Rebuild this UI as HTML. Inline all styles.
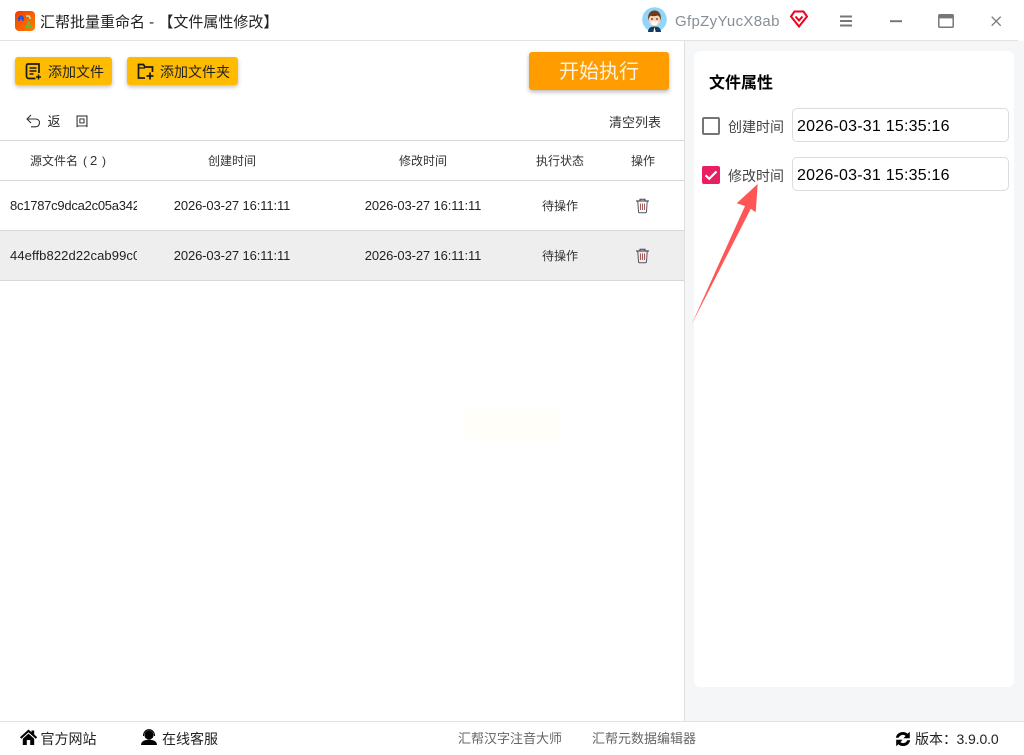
<!DOCTYPE html>
<html lang="zh"><head><meta charset="utf-8"><title>汇帮批量重命名</title>
<style>
html,body{margin:0;padding:0;width:1024px;height:755px;overflow:hidden;background:#fff}
body{font-family:"Liberation Sans","Noto Sans CJK SC",sans-serif;color:#222;position:relative}
.a{position:absolute;white-space:nowrap}
.c{text-align:center}
.l{position:absolute;background:#d8d8d8;height:1px;left:0;width:684px}
.btn{position:absolute;background:#ffbb00;border-radius:3px;box-shadow:0 2px 4px rgba(0,0,0,.25);height:28px;top:57px}
.t{font-size:13px;line-height:20px;letter-spacing:-.12px;color:#222}
.h{font-size:12px;line-height:20px;color:#333}
.in{position:absolute;left:792px;width:215px;height:32px;border:1px solid #dcdcdc;border-radius:5px;background:#fff;font-size:16px;line-height:35px;text-indent:4px;letter-spacing:.22px;color:#000;white-space:nowrap}
svg{position:absolute;overflow:visible}
</style></head><body>

<!-- title bar -->
<svg style="left:15px;top:11px" width="20" height="20" viewBox="0 0 20 20"><defs><linearGradient id="g" x1="0" y1="0" x2="1" y2="1"><stop offset="0" stop-color="#f23c00"/><stop offset="1" stop-color="#ff8000"/></linearGradient></defs><rect width="20" height="20" rx="4" fill="url(#g)"/><path d="M3 7.500h5M4 10V6.500L6 5l2 1.500V10" fill="none" stroke="#1a4fe0" stroke-width="1.400"/><path d="M11 5h3l1.500 3" fill="none" stroke="#b7e8a8" stroke-width="1.600"/><path d="M11 17l2.500-6 2.500 6M12 15h3" fill="none" stroke="#3bd04a" stroke-width="1.300"/></svg>
<div class="a" style="left:40px;top:12px;font-size:15px;line-height:22px;color:#222">汇帮批量重命名 - 【文件属性修改】</div>

<svg style="left:642px;top:7px" width="25" height="25" viewBox="0 0 25 25"><circle cx="12.500" cy="12.500" r="12.300" fill="#8fd6fa"/><path d="M6 25c0-4 3-5.500 6.500-5.500S19 21 19 25z" fill="#173a5e"/><path d="M12.500 20l-1.200 5h2.400z" fill="#fff"/><ellipse cx="12.500" cy="13" rx="5.800" ry="6.500" fill="#fbd3b4"/><path d="M6.300 14c-1.200-7 2-10.500 6.200-10.500s7.400 3.500 6.200 10.500c-.5-3.500-1.500-5-3-5.500-2 .8-6 .8-7 .3-1.200 1-2.100 2.500-2.400 4.700z" fill="#6e3a1e"/><path d="M8.800 14.500h7.400c-.5 3-2.200 3.800-3.700 3.800s-3.200-.8-3.700-3.800z" fill="#fff"/><circle cx="10" cy="12" r=".9" fill="#333"/><circle cx="15" cy="12" r=".9" fill="#333"/></svg>
<div class="a" style="left:675px;top:11px;font-size:15px;line-height:22px;color:#868e96;letter-spacing:.32px">GfpZyYucX8ab</div>
<svg style="left:790px;top:10px" width="18" height="18" viewBox="0 0 18 18"><path d="M4.500 1.500h9L17 6.500 9 16.500 1 6.500z" fill="#fff" stroke="#f0001c" stroke-width="2"/><path d="M5.500 6.500L9 10.500l3.500-4" fill="none" stroke="#f0001c" stroke-width="2"/></svg>

<svg style="left:840px;top:15px" width="13" height="12" viewBox="0 0 13 12"><path d="M0 1.500h12M0 6h12M0 10.500h12" stroke="#777" stroke-width="2"/></svg>
<svg style="left:890px;top:20px" width="13" height="3"><path d="M0 1.200h12" stroke="#777" stroke-width="2"/></svg>
<svg style="left:938px;top:14px" width="17" height="14" viewBox="0 0 17 14"><rect x=".8" y=".8" width="14.400" height="12.400" rx="1" fill="none" stroke="#777" stroke-width="1.500"/><rect x=".8" y=".8" width="14.400" height="3.600" fill="#777"/></svg>
<svg style="left:991px;top:16px" width="11" height="11" viewBox="0 0 11 11"><path d="M.7.700l9 9M9.700.700l-9 9" stroke="#777" stroke-width="1.300"/></svg>

<div class="a" style="left:0;top:40px;width:1018px;height:1px;background:#e2e2e2"></div>

<!-- right panel -->
<div class="a" style="left:684px;top:41px;width:340px;height:680px;background:#f5f6f8;border-left:1px solid #dedede;box-sizing:border-box"></div>
<div class="a" style="left:694px;top:51px;width:320px;height:636px;background:#fff;border-radius:6px"></div>
<div class="a" style="left:709px;top:73px;font-size:16px;line-height:22px;font-weight:700;color:#000">文件属性</div>

<div class="a" style="left:702px;top:117px;width:18px;height:18px;box-sizing:border-box;border:2px solid #757575;border-radius:2px;background:#fff"></div>
<div class="a" style="left:728px;top:117px;font-size:14px;line-height:20px;color:#444">创建时间</div>
<div class="in" style="top:108px">2026-03-31 15:35:16</div>

<div class="a" style="left:702px;top:166px;width:18px;height:18px;border-radius:2px;background:#e91e63"></div>
<svg style="left:702px;top:166px" width="18" height="18" viewBox="0 0 18 18"><path d="M3.500 9.300l3.700 3.500 7.300-7.300" fill="none" stroke="#fff" stroke-width="2.100"/></svg>
<div class="a" style="left:728px;top:166px;font-size:14px;line-height:20px;color:#444">修改时间</div>
<div class="in" style="top:157px">2026-03-31 15:35:16</div>

<svg style="left:0;top:0" width="1024" height="755"><path d="M757.700 184L755.700 212.300 750.800 208.800 691.800 324 745 206 736.700 203.300z" fill="#ff5555"/></svg>

<!-- toolbar -->
<div class="btn" style="left:15px;width:97px"></div>
<svg style="left:25px;top:63px" width="17" height="17" viewBox="0 0 17 17"><path d="M3 1h11v9M3 1C1.800 1 1.500 2 1.500 3v10c0 1.500 1 2.500 2.500 2.500h6.500" fill="none" stroke="#1a1a1a" stroke-width="1.700"/><path d="M4.500 5h7M4.500 8h7M4.500 11h4" stroke="#1a1a1a" stroke-width="1.400"/><path d="M11 14h5M13.500 11.500v5" stroke="#1a1a1a" stroke-width="1.500"/></svg>
<div class="a" style="left:48px;top:62px;font-size:14px;line-height:20px;color:#222">添加文件</div>

<div class="btn" style="left:127px;width:111px"></div>
<svg style="left:137px;top:63px" width="17" height="17" viewBox="0 0 17 17"><path d="M8 15H1.500V1.500h5L8 4h7.500v5" fill="none" stroke="#1a1a1a" stroke-width="1.700"/><path d="M1.500 5h6.500" stroke="#1a1a1a" stroke-width="1.300"/><path d="M9.500 13h7M13 9.500v7" stroke="#1a1a1a" stroke-width="1.800"/></svg>
<div class="a" style="left:160px;top:62px;font-size:14px;line-height:20px;color:#222">添加文件夹</div>

<div class="a c" style="left:529px;top:52px;width:140px;height:38px;background:#ff9c00;border-radius:3px;box-shadow:0 2px 4px rgba(0,0,0,.28);font-size:20px;line-height:40px;color:#fdf3e0">开始执行</div>

<svg style="left:26px;top:114px" width="15" height="14" viewBox="0 0 15 14"><path d="M5 1L1 5l4 4M1 5h8.500c2.500 0 4 1.600 4 3.800S12 12.800 9.500 12.800H5" fill="none" stroke="#333" stroke-width="1.100"/></svg>
<div class="a" style="left:47.500px;top:112px;font-size:13px;line-height:20px;color:#222">返</div>
<div class="a" style="left:75.500px;top:112px;font-size:13px;line-height:20px;color:#222">回</div>
<div class="a" style="left:609px;top:113px;font-size:13px;line-height:20px;color:#333">清空列表</div>

<!-- table -->
<div class="l" style="top:140px"></div>
<div class="l" style="top:180px"></div>
<div class="a" style="left:0;top:231px;width:684px;height:49px;background:#eee"></div>
<div class="l" style="top:230px"></div>
<div class="l" style="top:280px"></div>

<div class="a h" style="left:30px;top:151px">源文件名</div>
<div class="a h" style="left:83px;top:151px">(</div>
<div class="a h" style="left:90px;top:151px;font-size:13px">2</div>
<div class="a h" style="left:102px;top:151px">)</div>
<div class="a h c" style="left:172px;width:120px;top:151px">创建时间</div>
<div class="a h c" style="left:363px;width:120px;top:151px">修改时间</div>
<div class="a h c" style="left:500px;width:120px;top:151px">执行状态</div>
<div class="a h c" style="left:603px;width:80px;top:151px">操作</div>

<div class="a t" style="left:10px;top:196px;width:127px;overflow:hidden;letter-spacing:-.25px">8c1787c9dca2c05a342a91f</div>
<div class="a t c" style="left:172px;width:120px;top:196px">2026-03-27 16:11:11</div>
<div class="a t c" style="left:363px;width:120px;top:196px">2026-03-27 16:11:11</div>
<div class="a h c" style="left:500px;width:120px;top:196px">待操作</div>
<svg style="left:635px;top:198px" width="15" height="16" viewBox="0 0 15 16"><path d="M1 3h13" stroke="#4a3a4a" stroke-width="1.100"/><path d="M5 3V1.300h5V3" fill="none" stroke="#4a3a4a" stroke-width="1"/><path d="M2.800 3.500l.7 10c0 .8.500 1.200 1.200 1.200h5.600c.7 0 1.200-.4 1.200-1.200l.7-10" fill="none" stroke="#5a5060" stroke-width="1"/><path d="M5.500 5.500v6.500M7.500 5.500v6.500M9.500 5.500v6.500" stroke="#a85a5a" stroke-width="1"/></svg>

<div class="a t" style="left:10px;top:246px;width:127px;overflow:hidden;letter-spacing:.1px">44effb822d22cab99c0a7e1</div>
<div class="a t c" style="left:172px;width:120px;top:246px">2026-03-27 16:11:11</div>
<div class="a t c" style="left:363px;width:120px;top:246px">2026-03-27 16:11:11</div>
<div class="a h c" style="left:500px;width:120px;top:246px">待操作</div>
<svg style="left:635px;top:248px" width="15" height="16" viewBox="0 0 15 16"><path d="M1 3h13" stroke="#4a3a4a" stroke-width="1.100"/><path d="M5 3V1.300h5V3" fill="none" stroke="#4a3a4a" stroke-width="1"/><path d="M2.800 3.500l.7 10c0 .8.500 1.200 1.200 1.200h5.600c.7 0 1.200-.4 1.200-1.200l.7-10" fill="none" stroke="#5a5060" stroke-width="1"/><path d="M5.500 5.500v6.500M7.500 5.500v6.500M9.500 5.500v6.500" stroke="#a85a5a" stroke-width="1"/></svg>

<div class="a" style="left:465px;top:410px;width:95px;height:30px;background:#fffef8"></div>

<!-- footer -->
<div class="a" style="left:0;top:721px;width:1024px;height:1px;background:#e2e2e2"></div>
<svg style="left:20px;top:729px" width="18" height="16" viewBox="0 0 18 16"><path d="M0 8.200L8.500 .5 11.500 3.200V1.500H14.200V5.500L17.200 8.200 15.800 9.700 8.500 3.200 1.400 9.700z" fill="#000"/><path d="M2.800 9.800L8.500 4.600 14.200 9.800V16H10.200V11H6.800V16H2.800z" fill="#000"/></svg>
<div class="a" style="left:40.500px;top:729px;font-size:14px;line-height:20px;color:#222">官方网站</div>
<svg style="left:141px;top:729px" width="16" height="16" viewBox="0 0 16 16"><circle cx="8" cy="6" r="4.600" fill="#000"/><path d="M2.500 7C2.500 3 5 .7 8 .7s5.500 2.300 5.500 6.300" fill="none" stroke="#000" stroke-width="1.100"/><path d="M0 16c0-3.500 3-5.300 8-5.300s8 1.800 8 5.300z" fill="#000"/></svg>
<div class="a" style="left:162px;top:729px;font-size:14px;line-height:20px;color:#222">在线客服</div>
<div class="a" style="left:458px;top:729px;font-size:13px;line-height:20px;color:#666">汇帮汉字注音大师</div>
<div class="a" style="left:592px;top:729px;font-size:13px;line-height:20px;color:#666">汇帮元数据编辑器</div>
<svg style="left:895px;top:731px" width="16" height="16" viewBox="0 0 16 16"><path d="M.8 6.800C1.600 3 4.500 1 8 1c1.900 0 3.400.7 4.600 1.800L14.800.8V7.200H8.400l2.200-2.200C9.900 4.300 9 3.900 8 3.900c-2 0-3.700 1.200-4.300 2.900z" fill="#000"/><path d="M15.200 9.200C14.400 13 11.500 15 8 15c-1.900 0-3.400-.7-4.600-1.800L1.200 15.200V8.800h6.400L5.400 11c.7.700 1.600 1.100 2.600 1.100 2 0 3.700-1.200 4.300-2.900z" fill="#000"/></svg>
<div class="a" style="left:915px;top:729px;font-size:14px;line-height:20px;color:#222">版本：<span style="margin-left:-.5px;letter-spacing:-.1px">3.9.0.0</span></div>

</body></html>
